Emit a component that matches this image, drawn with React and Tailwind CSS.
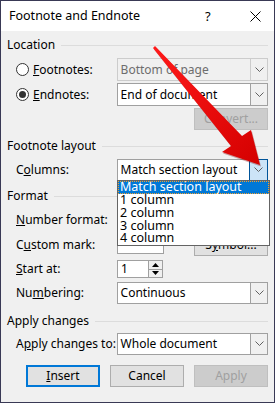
import React from 'react'

const FONT = "font-['Segoe_UI','Noto_Sans',sans-serif]"

function Chevron({ color = '#606060' }) {
  return (
    <svg width="9" height="6" viewBox="0 0 9 6">
      <polyline points="0.5,0.5 4.5,4.5 8.5,0.5" fill="none" stroke={color} strokeWidth="1" />
    </svg>
  )
}

function Select({ value, disabled, active, h = 'h-[23px]' }) {
  return (
    <div className={`flex w-[152px] ${h} border ${disabled ? 'border-[#cccccc] bg-[#f0f0f0] text-[#6d6d6d]' : 'border-[#a0a0a0] bg-white text-black'}`}>
      <div className="flex-1 flex items-center pl-[3px] whitespace-nowrap overflow-hidden">{value}</div>
      <div className={`w-[17px] flex items-center justify-center border-l ${active ? 'bg-[#cce4f7] border border-[#005499] -m-px w-[19px] h-[calc(100%+2px)]' : disabled ? 'border-[#cccccc] bg-[#f0f0f0]' : 'border-[#a0a0a0] bg-[#f0f0f0]'}`}>
        <Chevron />
      </div>
    </div>
  )
}

function Heading({ label, mt }) {
  return (
    <div className={`flex items-center h-[14px] ${mt}`}>
      <span className="whitespace-nowrap">{label}</span>
      <div className="flex-1 h-px bg-[#dcdcdc] ml-[6px]" />
    </div>
  )
}

function Row({ label, mt, h, children }) {
  return (
    <div className={`flex items-center ${mt} ${h}`}>
      <div className="w-[110px] pl-[9px] whitespace-nowrap">{label}</div>
      {children}
    </div>
  )
}

function Radio({ checked }) {
  return (
    <div className="w-[13px] h-[13px] rounded-full border border-[#333] bg-white flex items-center justify-center mr-[4px]">
      {checked && <div className="w-[7px] h-[7px] rounded-full bg-[#333]" />}
    </div>
  )
}

function Btn({ children, disabled, primary, className = '' }) {
  return (
    <div className={`h-[22px] flex items-center justify-center ${primary ? 'border-2 border-[#0078d7]' : disabled ? 'border border-[#bfbfbf]' : 'border border-[#adadad]'} ${disabled ? 'bg-[#cccccc] text-[#a0a0a0]' : 'bg-[#e1e1e1] text-black'} ${className}`}>
      {children}
    </div>
  )
}

export default function App() {
  return (
    <div className={`relative w-[275px] h-[403px] border border-[#393955] bg-[#f0f0f0] text-[12px] leading-none text-black ${FONT}`}>
      {/* title bar */}
      <div className="h-[30px] bg-white flex items-center pl-[8px] text-[12.5px]">
        <span className="flex-1">Footnote and Endnote</span>
        <span className="w-[14px] text-[13px] mr-[31px]">?</span>
        <svg width="11" height="11" viewBox="0 0 11 11" className="mr-[13px]">
          <path d="M0.5 0.5 L10.5 10.5 M10.5 0.5 L0.5 10.5" stroke="#000" strokeWidth="1" />
        </svg>
      </div>

      <div className="px-[6px]">
        <Heading label="Location" mt="mt-[7px]" />

        <div className="flex items-center mt-[6px] h-[23px]">
          <div className="w-[110px] pl-[9px] flex items-center"><Radio /><span><u>F</u>ootnotes:</span></div>
          <Select value="Bottom of page" disabled />
        </div>
        <div className="flex items-center mt-[2px] h-[23px]">
          <div className="w-[110px] pl-[9px] flex items-center"><Radio checked /><span><u>E</u>ndnotes:</span></div>
          <Select value="End of document" />
        </div>
        <div className="flex justify-end mt-[2px]">
          <Btn disabled className="w-[74px]">Convert...</Btn>
        </div>

        <Heading label="Footnote layout" mt="mt-[9px]" />
        <Row label={<span>C<u>o</u>lumns:</span>} mt="mt-[6px]" h="h-[22px]">
          <Select value="Match section layout" active h="h-[22px]" />
        </Row>

        <Heading label="Format" mt="mt-[8px]" />
        <Row label={<span><u>N</u>umber format:</span>} mt="mt-[5px]" h="h-[23px]">
          <Select value="" />
        </Row>
        <Row label={<span>C<u>u</u>stom mark:</span>} mt="mt-[2px]" h="h-[23px]">
          <div className="w-[47px] h-[18px] bg-white border border-[#a0a0a0]" />
          <div className="flex-1" />
          <Btn className="w-[74px] h-[23px] items-end pb-[4px]">S<u>y</u>mbol...</Btn>
        </Row>
        <Row label={<span><u>S</u>tart at:</span>} mt="mt-[4px]" h="h-[18px]">
          <div className="flex h-[18px] w-[46px] border border-[#a0a0a0] bg-white">
            <div className="flex-1 flex items-center pl-[3px]">1</div>
            <div className="w-[14px] flex flex-col border-l border-[#a0a0a0] bg-[#f0f0f0]">
              <div className="flex-1 flex items-center justify-center border-b border-[#a0a0a0]">
                <svg width="7" height="4" viewBox="0 0 7 4"><polygon points="3.5,0 7,4 0,4" fill="#000" /></svg>
              </div>
              <div className="flex-1 flex items-center justify-center">
                <svg width="7" height="4" viewBox="0 0 7 4"><polygon points="0,0 7,0 3.5,4" fill="#000" /></svg>
              </div>
            </div>
          </div>
        </Row>
        <Row label={<span>Nu<u>m</u>bering:</span>} mt="mt-[4px]" h="h-[22px]">
          <Select value="Continuous" h="h-[22px]" />
        </Row>

        <Heading label="Apply changes" mt="mt-[10px]" />
        <Row label={<span>A<u>p</u>ply changes to:</span>} mt="mt-[5px]" h="h-[22px]">
          <Select value="Whole document" h="h-[22px]" />
        </Row>

        <div className="flex mt-[10px] pl-[19px] gap-[10px]">
          <Btn primary className="w-[74px]"><span><u>I</u>nsert</span></Btn>
          <Btn className="w-[74px]">Cancel</Btn>
          <Btn disabled className="w-[74px]">Apply</Btn>
        </div>
      </div>

      {/* open dropdown list */}
      <div className="absolute left-[116px] top-[179px] w-[153px] h-[66px] bg-white border border-[#646464] flex flex-col text-[12.5px]">
        <div className="h-[13px] bg-[#0078d7] text-white flex items-center pl-[2px] outline-1 outline-dotted outline-[#f0a030] -outline-offset-1">Match section layout</div>
        <div className="h-[13px] flex items-center pl-[2px]">1 column</div>
        <div className="h-[13px] flex items-center pl-[2px]">2 column</div>
        <div className="h-[13px] flex items-center pl-[2px]">3 column</div>
        <div className="h-[13px] flex items-center pl-[2px]">4 column</div>
      </div>

      {/* red arrow */}
      <svg className="absolute left-0 top-0 pointer-events-none" width="275" height="403" viewBox="0 0 275 403">
        <defs>
          <linearGradient id="ar" x1="0" y1="0" x2="1" y2="1">
            <stop offset="0" stopColor="#ff1a1a" />
            <stop offset="1" stopColor="#d40000" />
          </linearGradient>
        </defs>
        <polygon points="154,45 241,135 250,129 259,164 221,151 230,145 152,47" fill="#7a0000" opacity="0.35" transform="translate(1,1.5)" />
        <polygon points="154,45 241,135 250,129 259,164 221,151 230,145 152,47" fill="url(#ar)" />
      </svg>
    </div>
  )
}
